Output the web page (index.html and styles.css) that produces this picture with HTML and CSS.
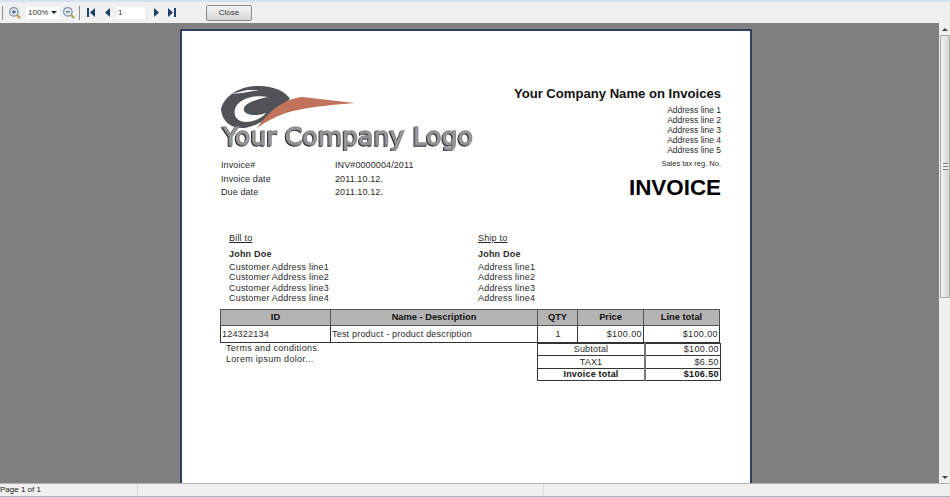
FILE: index.html
```html
<!DOCTYPE html>
<html lang="en">
<head>
  <meta charset="UTF-8" />
  <title>Invoice</title>
  <link rel="stylesheet" href="styles.css">
</head>
<body>
  <div class="toolbar">
    <span class="sep"></span>
    <svg class="tool zoom-in" width="14" height="14" viewBox="0 0 18 18">
      <circle cx="7.5" cy="7.5" r="5.500" fill="#dfe8f0" stroke="#8496a8" stroke-width="1.6"/>
      <path d="M5 7.5h5M7.5 5v5" stroke="#3d5878" stroke-width="1.4"/>
      <path d="M11.500 11.500l4 4" stroke="#b9a25a" stroke-width="3"/>
    </svg>
    <div class="zoom-box">100%<span class="caret"></span></div>
    <svg class="tool zoom-out" width="14" height="14" viewBox="0 0 18 18">
      <circle cx="7.5" cy="7.5" r="5.500" fill="#dfe8f0" stroke="#8496a8" stroke-width="1.6"/>
      <path d="M5 7.5h5" stroke="#3d5878" stroke-width="1.4"/>
      <path d="M11.500 11.500l4 4" stroke="#b9a25a" stroke-width="3"/>
    </svg>
    <span class="sep sep-right"></span>
    <svg class="nav nav-first" width="8" height="9" viewBox="0 0 8 9"><path d="M0 0h2v9H0zM8 0v9L3 4.500z" fill="#1f3f66"/></svg>
    <svg class="nav nav-prev" width="5" height="9" viewBox="0 0 5 9"><path d="M5 0v9L0 4.500z" fill="#1f3f66"/></svg>
    <div class="page-box">1</div>
    <svg class="nav nav-next" width="5" height="9" viewBox="0 0 5 9"><path d="M0 0v9l5-4.500z" fill="#1f3f66"/></svg>
    <svg class="nav nav-last" width="8" height="9" viewBox="0 0 8 9"><path d="M0 0v9l5-4.500zM6 0h2v9H6z" fill="#1f3f66"/></svg>
    <button class="close-button">Close</button>
  </div>

  <div class="viewer">
    <div class="canvas">
      <div class="page">
        <div class="top">
          <div class="top-left">
            <svg class="logo" width="256" height="66" viewBox="0 0 256 66">
              <path d="M1 25C3 12 18 2 35 1c17-1 31 5 35 13L58 24C50 32 40 40 25 43 12 44 3 38 1 25z" fill="#4f5357"/>
              <path d="M48 12C35 9 18 14 15 24c-2 8 3 13 11 13 8 0 16-4 20-9-8 3-19 3-22-2-2-6 8-11 24-14z" fill="#fff"/>
              <path d="M11 9l16-4 12 0-17 3z" fill="#fff"/>
              <path d="M37 43C47 28 63 14 82 12l53 6c-25 2-45 4-57 7-16 3-28 9-41 18z" fill="#c0725a"/>
              <text class="logo-text" x="3" y="60" textLength="250">Your Company Logo</text>
            </svg>
            <div class="meta">
              <div>Invoice#</div><div>INV#0000004/2011</div>
              <div>Invoice date</div><div>2011.10.12.</div>
              <div>Due date</div><div>2011.10.12.</div>
            </div>
          </div>
          <div class="company">
            <div class="company-name">Your Company Name on Invoices</div>
            <div class="address">
              Address line 1<br>Address line 2<br>Address line 3<br>Address line 4<br>Address line 5
            </div>
            <div class="tax">Sales tax reg. No.</div>
            <div class="invoice-title">INVOICE</div>
          </div>
        </div>

        <div class="parties">
          <div class="party">
            <div class="party-title">Bill to</div>
            <div class="party-name">John Doe</div>
            <div class="party-lines">Customer Address line1<br>Customer Address line2<br>Customer Address line3<br>Customer Address line4</div>
          </div>
          <div class="party">
            <div class="party-title">Ship to</div>
            <div class="party-name">John Doe</div>
            <div class="party-lines">Address line1<br>Address line2<br>Address line3<br>Address line4</div>
          </div>
        </div>

        <table class="items">
          <tr>
            <th class="col-id">ID</th>
            <th class="col-name">Name - Description</th>
            <th class="col-qty">QTY</th>
            <th class="col-price">Price</th>
            <th class="col-total">Line total</th>
          </tr>
          <tr>
            <td>124322134</td>
            <td>Test product - product description</td>
            <td class="center">1</td>
            <td class="right">$100.00</td>
            <td class="right">$100.00</td>
          </tr>
        </table>

        <div class="bottom">
          <div class="terms">Terms and conditions.<br>Lorem ipsum dolor...</div>
          <table class="totals">
            <tr><td class="label">Subtotal</td><td class="right amount">$100.00</td></tr>
            <tr><td class="label">TAX1</td><td class="right amount">$6.50</td></tr>
            <tr class="grand"><td class="label">Invoice total</td><td class="right amount">$106.50</td></tr>
          </table>
        </div>
      </div>
    </div>
    <div class="scrollbar">
      <div class="arrow-btn"><span class="arrow-up"></span></div>
      <div class="thumb"><span class="grip"></span></div>
      <div class="track"></div>
      <div class="arrow-btn"><span class="arrow-down"></span></div>
    </div>
  </div>

  <div class="status">
    <div class="status-page">Page 1 of 1</div>
    <div class="status-mid"></div>
    <div class="status-rest"></div>
  </div>
  <div class="bottom-strip"></div>
</body>
</html>
```

FILE: styles.css
```css
html, body {
  margin: 0;
  padding: 0;
}
body {
  width: 950px;
  height: 497px;
  overflow: hidden;
  display: flex;
  flex-direction: column;
  font-family: "Liberation Sans", Arial, sans-serif;
  background-color: #f0f0f0;
}

/* toolbar */
.toolbar {
  height: 21px;
  flex: none;
  border-top: 2px solid #d3e2f2;
  background-color: #f0f0f0;
  display: flex;
  align-items: center;
  color: #333;
  font-size: 8px;
}
.sep {
  width: 1px;
  height: 14px;
  margin-left: 2px;
  background-color: #8d8d8d;
}
.sep-right {
  margin-left: 3px;
}
.zoom-in {
  margin-left: 5px;
}
.zoom-box {
  width: 33px;
  height: 12px;
  margin-left: 4px;
  padding-left: 2px;
  box-sizing: border-box;
  background-color: #fff;
  line-height: 12px;
  display: flex;
  align-items: center;
  justify-content: space-between;
}
.caret {
  width: 0;
  height: 0;
  margin-right: 2px;
  border-left: 3px solid transparent;
  border-right: 3px solid transparent;
  border-top: 3px solid #222;
}
.zoom-out {
  margin-left: 3px;
}
.nav-first {
  margin-left: 7px;
}
.nav-prev {
  margin-left: 10px;
}
.page-box {
  width: 27px;
  height: 12px;
  margin-left: 7px;
  padding-left: 1px;
  background-color: #fff;
  line-height: 12px;
}
.nav-next {
  margin-left: 9px;
}
.nav-last {
  margin-left: 9px;
}
.close-button {
  width: 46px;
  height: 16px;
  margin-left: 30px;
  padding: 0;
  border: 1px solid #8a8a8a;
  border-radius: 2px;
  background: linear-gradient(#f4f4f4, #d6d6d6);
  color: #333;
  font-family: inherit;
  font-size: 8px;
}

/* report area */
.viewer {
  height: 460px;
  flex: none;
  display: flex;
}
.canvas {
  flex: 1;
  background-color: #808080;
  padding: 6px 0 0 180px;
  overflow: hidden;
}
.page {
  width: 501px;
  height: 600px;
  padding: 54px 29px 0 38px;
  border: 2px solid #2f3f63;
  background-color: #fff;
  color: #2a2a2a;
  font-size: 9px;
}
.top {
  display: flex;
  justify-content: space-between;
}
.logo {
  display: block;
}
.logo-text {
  font-family: "DejaVu Sans", sans-serif;
  font-size: 25px;
  fill: #a0a3a6;
  stroke: #8a8d91;
  stroke-width: 1.4px;
  filter: drop-shadow(-1px 1px 0 #303133);
}
.meta {
  display: grid;
  grid-template-columns: 114px auto;
  grid-auto-rows: 13.500px;
  margin-top: 8px;
  padding-left: 1px;
  line-height: 13px;
  letter-spacing: 0.1px;
}
.company {
  margin-top: 1px;
  text-align: right;
}
.company-name {
  font-size: 13.100px;
  font-weight: bold;
  color: #111;
  line-height: 16px;
}
.address {
  margin-top: 4px;
  font-size: 8.500px;
  line-height: 9.900px;
}
.tax {
  margin-top: 3px;
  font-size: 7.500px;
  line-height: 10px;
}
.invoice-title {
  margin-top: 6px;
  font-size: 22.400px;
  font-weight: bold;
  color: #000;
  line-height: 26px;
}
.parties {
  display: flex;
  margin-top: 31px;
  padding-left: 9px;
}
.party {
  flex: none;
  width: 249px;
  letter-spacing: 0.2px;
}
.party-title {
  text-decoration: underline;
  line-height: 12px;
}
.party-name {
  margin-top: 4px;
  font-weight: bold;
  line-height: 12px;
}
.party-lines {
  margin-top: 2px;
  line-height: 10.600px;
}
.items, .totals {
  border-collapse: collapse;
  table-layout: fixed;
}
.items {
  width: 500px;
  margin-top: 5px;
}
.items th {
  height: 15px;
  padding: 0;
  border: 1px solid #555;
  background-color: #b4b4b4;
  font-size: 9.300px;
  color: #111;
  text-align: center;
}
.items td {
  height: 16px;
  padding: 0 0 0 1px;
  border: 1px solid #333;
  letter-spacing: 0.2px;
  white-space: nowrap;
}
.col-id {
  width: 109px;
}
.col-name {
  width: 206px;
}
.col-qty {
  width: 39px;
}
.col-price {
  width: 65px;
}
.center {
  text-align: center;
}
.items td.right, .totals td.right {
  text-align: right;
  padding: 0 1px 0 0;
  letter-spacing: 0.4px;
}
.bottom {
  display: flex;
  justify-content: space-between;
}
.terms {
  padding-left: 6px;
  line-height: 11px;
  letter-spacing: 0.3px;
}
.totals {
  width: 184px;
}
.totals td {
  height: 11.500px;
  padding: 0;
  border: 1px solid #333;
  line-height: 11px;
  letter-spacing: 0.2px;
}
.totals .label {
  width: 106px;
  text-align: center;
}
.totals .amount {
  border-left: 2px solid #777;
}
.grand td {
  font-weight: bold;
  color: #111;
}

/* scrollbar */
.scrollbar {
  width: 11px;
  flex: none;
  display: flex;
  flex-direction: column;
  background-color: #f0f0f0;
}
.arrow-btn {
  height: 12px;
  flex: none;
  display: flex;
  align-items: center;
  justify-content: center;
}
.arrow-up, .arrow-down {
  width: 0;
  height: 0;
  border-left: 3px solid transparent;
  border-right: 3px solid transparent;
}
.arrow-up {
  border-bottom: 3px solid #444;
}
.arrow-down {
  border-top: 3px solid #444;
}
.thumb {
  height: 263px;
  flex: none;
  box-sizing: border-box;
  margin-left: 1px;
  border: 1px solid #aaa;
  background: linear-gradient(90deg, #f2f2f2, #d6d6d6);
  display: flex;
  align-items: center;
  justify-content: center;
}
.grip {
  width: 5px;
  height: 5px;
  border-top: 1px solid #777;
  border-bottom: 1px solid #777;
  background: linear-gradient(#f0f0f0 40%, #777 40%, #777 60%, #f0f0f0 60%);
}
.track {
  flex: 1;
}

/* status bar */
.status {
  height: 12px;
  flex: none;
  display: flex;
  border-top: 1px solid #b4b4b4;
  background-color: #f0eeee;
  font-size: 8px;
  line-height: 12px;
  color: #222;
}
.status-page {
  width: 137px;
  border-right: 1px solid #dcdcdc;
}
.status-mid {
  width: 405px;
  border-right: 1px solid #dcdcdc;
}
.status-rest {
  flex: 1;
}
.bottom-strip {
  flex: 1;
  background-color: #a9b5c0;
}
```
